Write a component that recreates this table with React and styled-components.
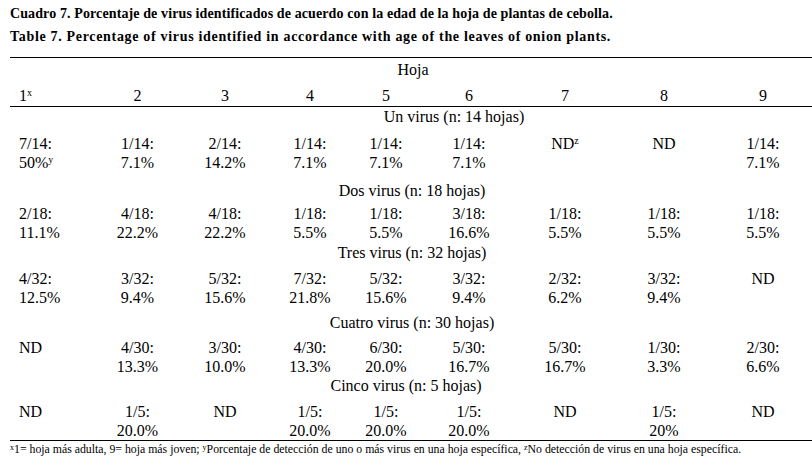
import React from "react";
import styled, { createGlobalStyle } from "styled-components";

const GlobalStyle = createGlobalStyle`
  html, body {
    margin: 0;
    padding: 0;
    background: #fff;
  }
  body {
    width: 812px;
    height: 465px;
    overflow: hidden;
  }
`;

const Page = styled.div`
  padding: 2px 0 0 10px;
  font-family: "Liberation Serif", "Times New Roman", Times, serif;
  color: #000;
`;

const Caption = styled.div`
  font-size: 14px;
  font-weight: bold;
  line-height: 23px;
  letter-spacing: ${(p) => p.$track || 0}px;
  white-space: nowrap;
`;

const Table = styled.div`
  margin-top: 9px;
  border-top: 1px solid #000;
  font-size: 16px;
`;

const Row = styled.div`
  display: grid;
  grid-template-columns: 85px 85px 90px 80px 72px 94px 98px 100px 98px;
  padding-top: ${(p) => p.$top || 0}px;
  border-bottom: ${(p) => (p.$rule ? "1px solid #000" : "none")};
`;

const Cell = styled.div`
  text-align: ${(p) => (p.$first ? "left" : "center")};
  padding-left: ${(p) => (p.$first ? 9 : 0)}px;
  line-height: ${(p) => p.$lh || 19}px;
  white-space: nowrap;
`;

const Group = styled.div`
  text-align: center;
  line-height: 20px;
  padding-top: ${(p) => p.$top || 0}px;
  padding-left: ${(p) => Math.max(0, p.$offset * 2)}px;
  padding-right: ${(p) => Math.max(0, -p.$offset * 2)}px;
  white-space: nowrap;
`;

const Sup = styled.span`
  font-size: ${(p) => p.$size || 10}px;
  line-height: 0;
  vertical-align: ${(p) => p.$raise || 5}px;
`;

const Footnote = styled.div`
  border-top: 1px solid #000;
  font-size: 11.8px;
  line-height: 17px;
  white-space: nowrap;
`;

const groups = [
  {
    title: "Un virus (n: 14 hojas)",
    offset: 43,
    headTop: 0,
    top: 7,
    cells: [
      ["7/14:", "50%", "y"],
      ["1/14:", "7.1%"],
      ["2/14:", "14.2%"],
      ["1/14:", "7.1%"],
      ["1/14:", "7.1%"],
      ["1/14:", "7.1%"],
      ["ND", null, "z"],
      ["ND"],
      ["1/14:", "7.1%"],
    ],
  },
  {
    title: "Dos virus (n: 18 hojas)",
    offset: 1,
    headTop: 9,
    top: 3,
    cells: [
      ["2/18:", "11.1%"],
      ["4/18:", "22.2%"],
      ["4/18:", "22.2%"],
      ["1/18:", "5.5%"],
      ["1/18:", "5.5%"],
      ["3/18:", "16.6%"],
      ["1/18:", "5.5%"],
      ["1/18:", "5.5%"],
      ["1/18:", "5.5%"],
    ],
  },
  {
    title: "Tres virus (n: 32 hojas)",
    offset: 1,
    headTop: 1,
    top: 6,
    cells: [
      ["4/32:", "12.5%"],
      ["3/32:", "9.4%"],
      ["5/32:", "15.6%"],
      ["7/32:", "21.8%"],
      ["5/32:", "15.6%"],
      ["3/32:", "9.4%"],
      ["2/32:", "6.2%"],
      ["3/32:", "9.4%"],
      ["ND"],
    ],
  },
  {
    title: "Cuatro virus (n: 30 hojas)",
    offset: 1,
    headTop: 6,
    top: 5,
    cells: [
      ["ND"],
      ["4/30:", "13.3%"],
      ["3/30:", "10.0%"],
      ["4/30:", "13.3%"],
      ["6/30:", "20.0%"],
      ["5/30:", "16.7%"],
      ["5/30:", "16.7%"],
      ["1/30:", "3.3%"],
      ["2/30:", "6.6%"],
    ],
  },
  {
    title: "Cinco virus (n: 5 hojas)",
    offset: -5,
    headTop: 0,
    top: 6,
    cells: [
      ["ND"],
      ["1/5:", "20.0%"],
      ["ND"],
      ["1/5:", "20.0%"],
      ["1/5:", "20.0%"],
      ["1/5:", "20.0%"],
      ["ND"],
      ["1/5:", "20%"],
      ["ND"],
    ],
  },
];

const Value = ({ cell, first }) => {
  const [top, bottom, mark] = cell;
  return (
    <Cell $first={first}>
      <div>
        {top}
        {mark === "z" && <Sup>z</Sup>}
      </div>
      <div>
        {bottom || "\u00a0"}
        {mark === "y" && <Sup>y</Sup>}
      </div>
    </Cell>
  );
};

export default function App() {
  return (
    <Page>
      <GlobalStyle />
      <Caption $track={0.11}>
        Cuadro 7. Porcentaje de virus identificados de acuerdo con la edad de
        la hoja de plantas de cebolla.
      </Caption>
      <Caption $track={0.68}>
        Table 7. Percentage of virus identified in accordance with age of the
        leaves of onion plants.
      </Caption>
      <Table>
        <Group $top={2} $offset={2}>
          Hoja
        </Group>
        <Row $top={6} $rule>
          {[1, 2, 3, 4, 5, 6, 7, 8, 9].map((n) => (
            <Cell key={n} $first={n === 1} $lh={20}>
              {n}
              {n === 1 && <Sup>x</Sup>}
            </Cell>
          ))}
        </Row>
        {groups.map((g) => (
          <React.Fragment key={g.title}>
            <Group $top={g.headTop} $offset={g.offset}>
              {g.title}
            </Group>
            <Row $top={g.top}>
              {g.cells.map((c, i) => (
                <Value key={i} cell={c} first={i === 0} />
              ))}
            </Row>
          </React.Fragment>
        ))}
      </Table>
      <Footnote>
        <Sup $size={8} $raise={3}>x</Sup>1= hoja más adulta, 9= hoja más joven;{" "}
        <Sup $size={8} $raise={3}>y</Sup>Porcentaje de detección de uno o más
        virus en una hoja específica,{" "}
        <Sup $size={8} $raise={3}>z</Sup>No detección de virus en una hoja
        específica.
      </Footnote>
    </Page>
  );
}
